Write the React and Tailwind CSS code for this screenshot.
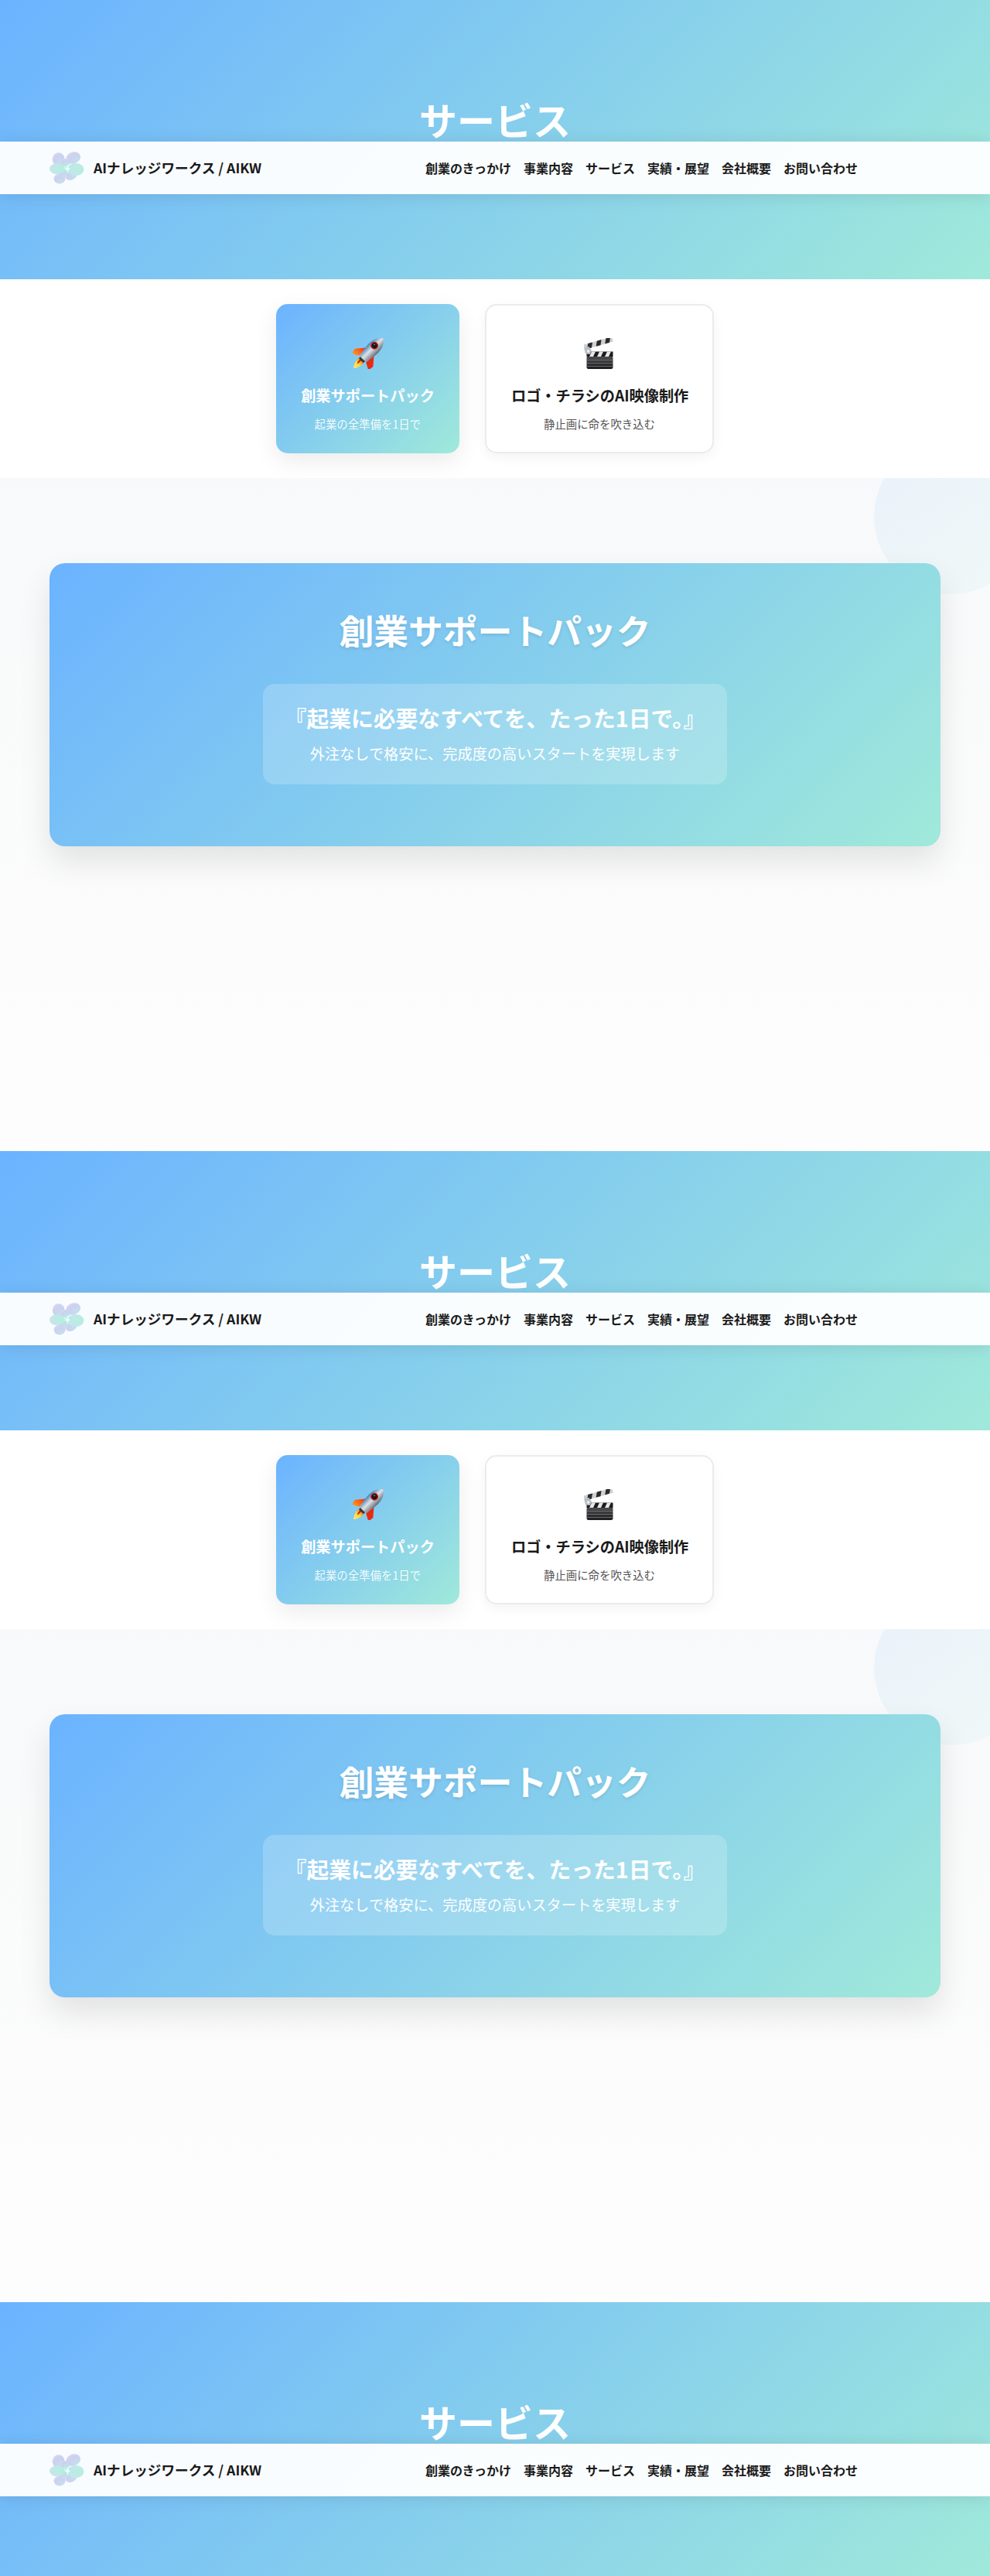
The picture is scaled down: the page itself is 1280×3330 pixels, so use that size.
import React from "react";

function LogoMark() {
  return (
    <svg width="45" height="42" viewBox="0 0 45 42" className="shrink-0">
      <defs>
        <radialGradient id="lav" cx="0.65" cy="0.8" r="0.9">
          <stop offset="0" stopColor="#c2e0ec" />
          <stop offset="0.6" stopColor="#cdd0ef" />
          <stop offset="1" stopColor="#d8d8f2" />
        </radialGradient>
        <radialGradient id="mint" cx="0.75" cy="0.5" r="0.85">
          <stop offset="0" stopColor="#b4efdf" />
          <stop offset="0.7" stopColor="#c4e6ea" />
          <stop offset="1" stopColor="#d4e4f2" />
        </radialGradient>
        <radialGradient id="core" cx="0.5" cy="0.5" r="0.5">
          <stop offset="0" stopColor="#a8f3dc" />
          <stop offset="1" stopColor="#a8f3dc" stopOpacity="0" />
        </radialGradient>
        <filter id="soft">
          <feGaussianBlur stdDeviation="0.5" />
        </filter>
      </defs>
      <g filter="url(#soft)">
        <ellipse cx="11.700" cy="9.700" rx="8" ry="8.500" fill="url(#lav)" />
        <ellipse cx="30.700" cy="8" rx="9.500" ry="7.500" transform="rotate(-20 30.700 8)" fill="url(#lav)" />
        <ellipse cx="20" cy="14" rx="6" ry="5" fill="url(#lav)" />
        <ellipse cx="13" cy="35" rx="7.500" ry="6.500" fill="url(#lav)" />
        <ellipse cx="28" cy="30.500" rx="8" ry="6" transform="rotate(-25 28 30.500)" fill="url(#lav)" />
        <ellipse cx="18" cy="28" rx="6" ry="5" fill="url(#lav)" />
        <ellipse cx="9.700" cy="22.300" rx="9.700" ry="7" fill="url(#mint)" />
        <ellipse cx="34" cy="23" rx="10.500" ry="8" fill="url(#mint)" />
        <ellipse cx="23" cy="22" rx="8" ry="8.500" fill="url(#core)" />
      </g>
      <path d="M23.500 16l.8 4.800 2.700 1.400-2.700 1.400-.8 4.800-.8-4.800-2.700-1.400 2.700-1.400z" fill="#ffffff" opacity="0.95" />
    </svg>
  );
}

function RocketIcon() {
  return (
    <svg width="40" height="40" viewBox="0 0 40 40">
      <defs>
        <linearGradient id="hull" x1="0" y1="0" x2="1" y2="0">
          <stop offset="0" stopColor="#3f7fb8" />
          <stop offset="0.45" stopColor="#dfe3e6" />
          <stop offset="0.75" stopColor="#9aa3aa" />
          <stop offset="1" stopColor="#5e6a75" />
        </linearGradient>
        <linearGradient id="fin" x1="0" y1="0" x2="0" y2="1">
          <stop offset="0" stopColor="#ff2a10" />
          <stop offset="1" stopColor="#ffa020" />
        </linearGradient>
        <linearGradient id="flame" x1="0" y1="0" x2="0" y2="1">
          <stop offset="0" stopColor="#e8641a" />
          <stop offset="0.5" stopColor="#ffd83a" />
          <stop offset="1" stopColor="#ffe98a" />
        </linearGradient>
      </defs>
      <g transform="rotate(45 20 20)">
        <path d="M16 30c-1.500 5-.5 11 4 17 4.500-6 5.500-12 4-17z" fill="url(#flame)" />
        <path d="M12.500 17l-9 10.500 1 7.500 9.500-5z" fill="url(#fin)" />
        <path d="M27.500 17l9 10.500-1 7.500-9.500-5z" fill="#e82a12" />
        <path d="M20 32.500l-2.200-1 .4 6 1.800 2z" fill="#c01a10" />
        <path d="M20-7.500c5.500 3 8.500 10.500 8.500 18 0 8-2.500 16-4.500 21.500h-8c-2-5.500-4.500-13.500-4.500-21.500 0-7.500 3-15 8.500-18z" fill="url(#hull)" />
        <path d="M15.500 30h9l-.6 3h-7.800z" fill="#333a42" />
        <circle cx="18.500" cy="7" r="5" fill="#d21f1a" />
        <circle cx="18.500" cy="7" r="3.500" fill="#16161c" />
        <circle cx="17.500" cy="6" r="1" fill="#7d7f88" />
      </g>
    </svg>
  );
}

function ClapperIcon() {
  return (
    <svg width="40" height="40" viewBox="0 0 40 40">
      <defs>
        <linearGradient id="board" x1="0" y1="0" x2="0" y2="1">
          <stop offset="0" stopColor="#505052" />
          <stop offset="1" stopColor="#1c1c1e" />
        </linearGradient>
      </defs>
      <rect x="3.500" y="23" width="34" height="17" rx="2.500" fill="url(#board)" />
      <path d="M4 28.500h33M4 32.500h33M4 36.500h33" stroke="#77777a" strokeWidth="0.8" />
      <path d="M3.500 17.500h34v6.500h-34z" fill="#1b1b1d" />
      <path d="M10 17.500h5l-3 6.500H7zM20 17.500h5l-3 6.500h-5zM30 17.500h5l-3 6.500h-5z" fill="#e6e6e6" />
      <g transform="rotate(-16 1 14)">
        <path d="M1 8.500h38v6.500H1z" fill="#cfcfcf" />
        <path d="M7 8.500h6l-3 6.500H4zM19 8.500h6l-3 6.500h-6zM31 8.500h6l-3 6.500h-6z" fill="#2a2a2c" />
      </g>
      <path d="M0 12.500l6.500-1.500 3.500 5.500-2 4.500-6-.5z" fill="#b9bfc4" />
      <circle cx="5.500" cy="17" r="1.800" fill="#eef1f3" />
    </svg>
  );
}

const navLinks = ["創業のきっかけ", "事業内容", "サービス", "実績・展望", "会社概要", "お問い合わせ"];

function Hero() {
  return (
    <section className="relative h-[361px] bg-[linear-gradient(135deg,#6bb3ff,#a0e9da)] pt-[110px] text-center">
      <h1 className="text-[49px] font-bold text-white leading-[1.8]">サービス</h1>
      <nav className="absolute left-0 right-0 top-[183px] h-[68px] bg-white/95 shadow-[0_2px_20px_rgba(0,0,0,0.1)] flex items-center justify-between pl-[64px] pr-[171px]">
        <div className="flex items-center gap-[12px]">
          <LogoMark />
          <span className="text-[17.6px] font-bold text-[#1a1a1a]">AIナレッジワークス / AIKW</span>
        </div>
        <div className="flex gap-[16px]">
          {navLinks.map((link) => (
            <a key={link} className="text-[16px] font-bold text-[#1a1a1a]">
              {link}
            </a>
          ))}
        </div>
      </nav>
    </section>
  );
}

function Tabs() {
  return (
    <section className="h-[257px] bg-white pt-[32px] flex justify-center items-start gap-[33px]">
      <div className="w-[237px] h-[193px] rounded-[15px] bg-[linear-gradient(135deg,#6bb3ff,#a0e9da)] shadow-[0_10px_30px_rgba(0,0,0,0.08)] px-[32px] py-[24px] text-center text-white">
        <div className="h-[76px] pt-[4px] flex items-center justify-center">
          <RocketIcon />
        </div>
        <h3 className="mt-[1px] text-[19.2px] font-bold whitespace-nowrap">創業サポートパック</h3>
        <p className="mt-[6px] text-[14.4px] opacity-90 whitespace-nowrap">起業の全準備を1日で</p>
      </div>
      <div className="w-[296px] h-[193px] rounded-[15px] bg-white border-2 border-[#e9ecef] shadow-[0_5px_15px_rgba(0,0,0,0.05)] px-[32px] py-[22px] text-center">
        <div className="h-[76px] pt-[4px] flex items-center justify-center">
          <ClapperIcon />
        </div>
        <h3 className="mt-[1px] text-[19.2px] font-bold text-[#1a1a1a] whitespace-nowrap">ロゴ・チラシのAI映像制作</h3>
        <p className="mt-[6px] text-[14.4px] text-[#555555] whitespace-nowrap">静止画に命を吹き込む</p>
      </div>
    </section>
  );
}

function Detail() {
  return (
    <section className="relative h-[870px] overflow-hidden bg-[linear-gradient(180deg,#f8f9fa,#fdfdfd)] pt-[110px] px-[64px]">
      <div className="absolute -top-[50px] -right-[50px] w-[200px] h-[200px] rounded-full bg-[linear-gradient(135deg,#6bb3ff,#a0e9da)] opacity-10" />
      <div className="relative h-[366px] rounded-[20px] bg-[linear-gradient(135deg,#6bb3ff,#a0e9da)] shadow-[0_20px_40px_rgba(0,0,0,0.1)] pt-[46px] text-center text-white">
        <h2 className="text-[44.8px] font-bold [text-shadow:0_2px_4px_rgba(0,0,0,0.1)]">創業サポートパック</h2>
        <div className="mx-auto mt-[29px] w-[600px] h-[130px] rounded-[15px] bg-white/20 pt-[18px]">
          <p className="text-[28.8px] font-bold">『起業に必要なすべてを、たった1日で。』</p>
          <p className="mt-[4px] text-[19.2px]">外注なしで格安に、完成度の高いスタートを実現します</p>
        </div>
      </div>
    </section>
  );
}

export default function App() {
  return (
    <div className="h-[3330px] overflow-hidden font-['Noto_Sans_CJK_JP','Noto_Sans',sans-serif] leading-[1.8]">
      {[0, 1].map((i) => (
        <div key={i}>
          <Hero />
          <Tabs />
          <Detail />
        </div>
      ))}
      <Hero />
    </div>
  );
}
